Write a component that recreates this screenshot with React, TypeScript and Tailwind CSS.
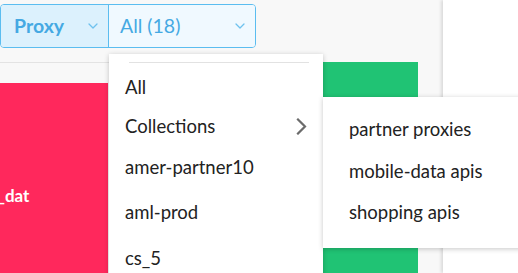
import React from 'react';

const ChevronDown = ({ className }: { className?: string }) => (
  <svg className={className} width="10" height="6" viewBox="0 0 10 6" fill="none">
    <path d="M1 1l4 4 4-4" stroke="currentColor" strokeWidth="1.3" strokeLinecap="round" strokeLinejoin="round" />
  </svg>
);

const ChevronRight = () => (
  <svg width="11" height="17" viewBox="0 0 11 17" fill="none">
    <path d="M2 1.5l7 7-7 7" stroke="#6b6b6b" strokeWidth="2.2" strokeLinecap="square" />
  </svg>
);

const items = [
  { label: 'amer-partner10', h: 'h-[44px]' },
  { label: 'aml-prod', h: 'h-[46px]' },
  { label: 'cs_5', h: 'h-[46px]' },
];
const collections = ['partner proxies', 'mobile-data apis', 'shopping apis'];

const App = () => {
  return (
    <div
      className="relative flex h-[273px] w-[518px] overflow-hidden bg-[#f8f8f8]"
      style={{ fontFamily: 'Lato, "Open Sans", sans-serif' }}
    >
      {/* main column */}
      <div className="flex w-[443px] flex-col">
        <div className="h-[62px] pt-[4px]">
          <div className="flex h-[44px] w-[256px] overflow-hidden rounded-[4px] border border-[#5bbdf0] text-[19.5px] text-[#45a9e3]">
            <div className="flex w-[107px] items-center justify-between bg-[#dcf1fd] pl-[13px] pr-[10px] font-bold">
              <span>Proxy</span>
              <ChevronDown className="text-[#6fc2ee]" />
            </div>
            <div className="flex flex-1 items-center justify-between border-l border-[#5bbdf0] bg-[#f0f9ff] pl-[11px] pr-[10px]">
              <span>All (18)</span>
              <ChevronDown className="text-[#6fc2ee]" />
            </div>
          </div>
        </div>
        <div className="flex flex-1">
          <div className="flex w-[323px] flex-col border-t border-[#e3e3e3]">
            <div className="mt-[20px] flex w-[108px] flex-1 items-start overflow-hidden bg-[#ff285c] pt-[100px]">
              <span className="-ml-[3px] text-[17px] font-bold text-white">_dat</span>
            </div>
          </div>
          <div className="w-[95px] bg-[#20c374]" />
        </div>
      </div>
      {/* right panel */}
      <div className="flex-1 bg-white shadow-[-2px_0_3px_rgba(0,0,0,0.12)]" />

      {/* dropdown menu */}
      <div className="absolute left-[109px] top-[54px] h-[240px] w-[214px] bg-white shadow-[0_1px_5px_rgba(0,0,0,0.22)]">
        <div className="mx-[20px] mr-[14px] mt-[8px] border-t border-[#e2e2e2]" />
        <div className="flex flex-col pt-[5px] text-[18.5px] text-[#222]">
          <div className="flex h-[39px] items-center pl-[16px]">All</div>
          <div className="flex h-[39px] items-center justify-between pl-[16px] pr-[16px]">
            <span>Collections</span>
            <ChevronRight />
          </div>
          {items.map((item) => (
            <div key={item.label} className={`flex ${item.h} items-center pl-[16px]`}>
              {item.label}
            </div>
          ))}
        </div>
      </div>

      {/* submenu */}
      <div className="absolute left-[323px] top-[97px] flex h-[151px] w-[200px] flex-col justify-center bg-white pb-[2px] text-[18.5px] text-[#222] shadow-[0_1px_5px_rgba(0,0,0,0.22)]">
        {collections.map((c) => (
          <div key={c} className="flex h-[41.5px] items-center pl-[26px]">
            {c}
          </div>
        ))}
      </div>
    </div>
  );
};

export default App;
